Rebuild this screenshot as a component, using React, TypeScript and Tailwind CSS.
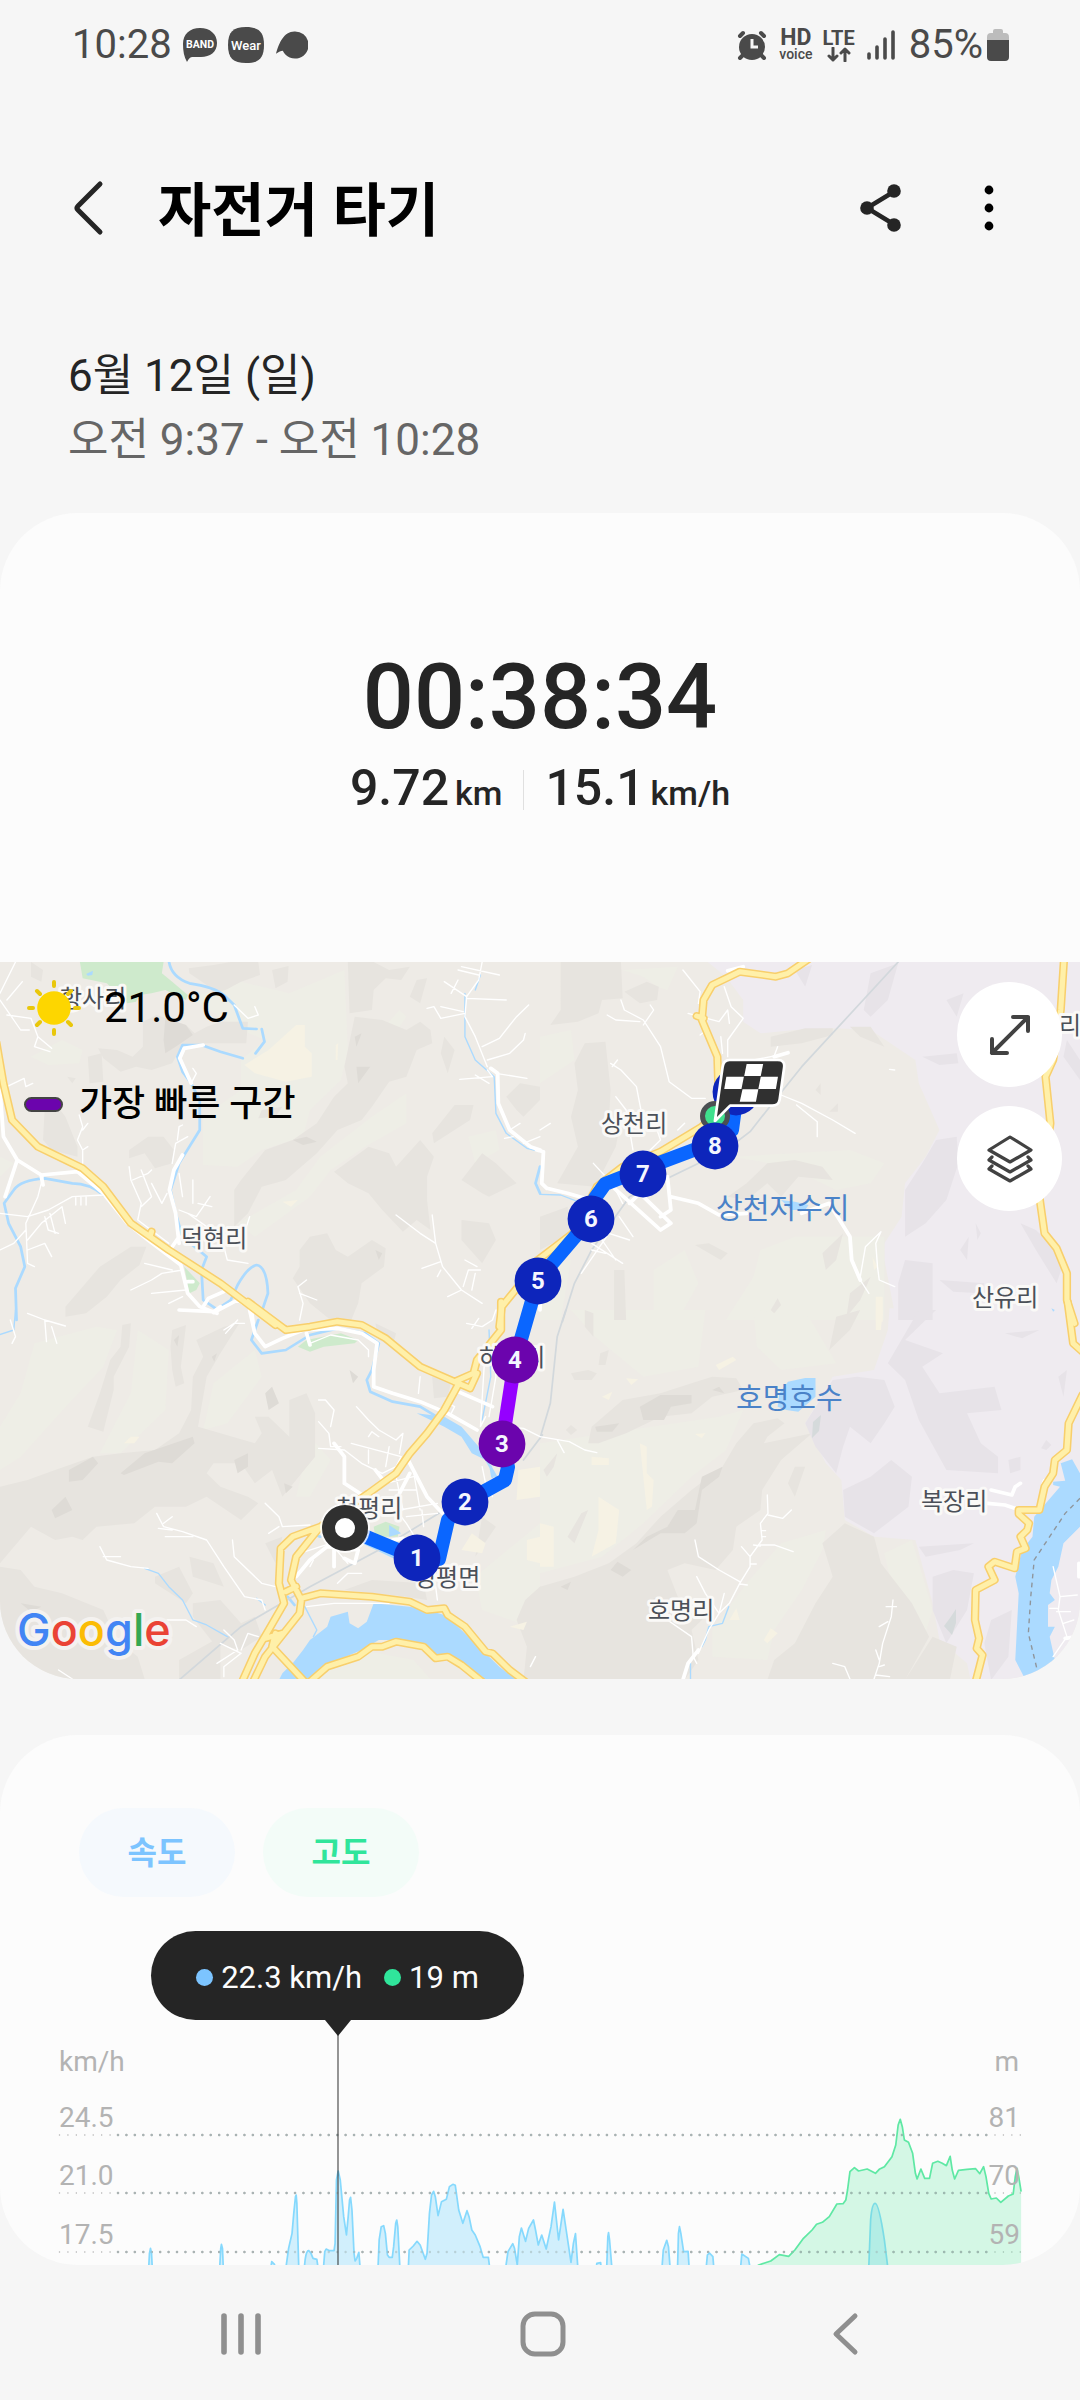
import React from "react";

type Tile = {
  at: string;
  region?: string;
  pale?: string;
  hill: string;
  violetHill?: string;
  ridge?: string;
  field: string;
  park?: string;
  lake: string;
  river: string;
  stream: string;
  rail: string;
  lane: string;
  street: string;
  highway: string;
};

const tiles: Tile[] = [
  {
    at: "translate(0 -12) scale(.34439 .33333)",
    pale: "M545 140L640 120L700 95L840 130L1000 60L1010 300L990 390L900 480L880 560L760 600L690 650L590 645L590 500L700 420L700 330L770 270L700 240ZM90 320L180 270L240 300L230 340L140 345ZM0 620L40 640L0 680ZM860 720L930 620L1080 500L1180 430L1180 520L1060 590L960 660L900 740L740 860L690 820ZM1100 250L1160 180L1180 200L1120 290ZM1360 560L1440 540L1450 600L1380 640Z",
    hill: "M548 55L620 45L670 36L750 36L755 75L700 95L655 120L620 128L600 105L550 70ZM790 60L838 48L835 95L800 115ZM1010 36L1085 36L1130 60L1190 50L1165 90L1120 85L1085 120L1080 180L1015 190ZM415 215L455 195L540 225L565 250L600 230L640 215L720 215L715 280L600 280L530 285L500 340L440 360L395 350L350 365L300 325L285 295L340 300L385 320L415 290ZM255 320L295 310L300 395L260 400ZM130 470L160 460L190 500L225 590L225 620L150 600L125 570ZM375 600L430 560L475 560L505 600L500 640L450 655L420 610L375 625ZM680 720L700 690L770 600L850 570L920 520L970 440L1010 400L1000 350L1030 200L1110 210L1180 240L1220 215L1250 240L1255 280L1210 300L1180 380L1130 395L1080 470L1050 510L980 540L920 610L830 690L760 710L720 790L680 830ZM970 665L1070 590L1130 610L1150 650L1220 570L1260 620L1240 680L1240 750L1250 840L1210 810L1170 845L1110 780L1070 730L1010 700ZM1255 550L1320 465L1375 465L1365 510L1260 580ZM1470 440L1510 400L1568 410L1568 450L1520 500L1500 480ZM1340 690L1400 610L1440 640L1500 700L1420 740L1400 730ZM870 900L900 860L950 850L975 900L1010 920L1080 870L1120 895L1115 950L1050 1000L1040 1060L1020 1110L960 1110L900 1060L850 985L870 950ZM190 1070L240 1010L290 950L380 890L425 890L405 945L350 990L310 1040L250 1090L190 1100ZM1340 810L1420 820L1440 870L1400 940L1340 870ZM90 36L125 60L120 95L90 80ZM1210 90L1240 85L1220 160L1190 140ZM1290 260L1320 300L1300 370L1280 310ZM760 480L820 470L800 500L750 505ZM195 380L220 385L210 400Z",
    ridge: "M480 205L540 225L560 255L510 290L480 310L475 270ZM850 570L890 560L920 575L880 585ZM1035 350L1075 350L1040 400ZM1030 260L1050 250L1035 290ZM1090 900L1110 910L1100 930Z",
    field: "M710 345L780 300L860 225L885 225L885 290L905 310L905 380L830 395L740 370ZM975 285L982 280L980 330L975 330ZM820 755L865 750L845 770Z",
    park: "M232 36H475L470 70L500 95L545 135L540 150L480 120L440 130L405 135L395 155L370 160L310 100L275 92L240 85ZM535 950L580 1000L570 1020L550 1030Z",
    lake: "M250 72L270 62L268 75L255 77Z",
    river:
      "M490 30Q495 80 550 100Q620 110 650 135L680 165L705 235L745 237M760 237L768 275L742 310M705 325L640 305L585 285L530 285L515 320L530 365L555 400L580 450L580 540L550 590L520 640L495 720L510 790L530 860L600 920L585 960L590 1050L630 1078L670 1050L690 1005Q720 950 745 945Q775 950 778 1030L760 1085M300 735Q260 700 210 700L130 685Q60 690 40 720L12 760L25 820L60 890L72 950L45 1015L48 1110M1568 650L1555 700L1568 730",
    stream: "M1395 75L1380 120M1350 130L1350 260L1380 330L1435 380L1440 490L1470 550L1530 595L1568 605",
    rail: "",
    lane: "M45 36L0 130M0 150L40 210L60 240L85 240M20 150L65 95M20 195L90 205L110 260L150 295M110 260L100 290L145 305M20 410L70 385L75 410L95 400M240 640L240 600L225 570L240 530L230 495M240 540L255 520M240 600L255 590M125 680L110 740L75 820L80 940L100 950M0 790L80 800L140 780L210 740L300 735M80 870L120 820L180 770L190 820M75 840L40 880L0 900M80 900L130 880L150 920M145 790L160 850M130 800L140 840L170 850M220 740L220 765M235 740L235 765M250 740L250 765M490 880L400 810L410 760L380 690L375 650M385 690L430 670L440 660M410 770L440 740L410 660M440 700L470 760L485 730M500 640L510 580L545 560M515 570L520 530L530 525M555 400L570 370L560 355M520 780L570 800L610 740M530 740L520 670M560 760L560 690M545 790L600 830L590 850M575 760L615 770M1400 36L1390 90L1355 140L1350 200L1380 260L1415 350M1390 75L1330 60M1340 50L1450 75M1355 140L1290 95M1310 130L1330 90M1355 145L1470 150M1350 190L1280 205L1260 170L1240 175M1280 170L1345 185M1400 290L1450 265L1500 200L1535 165M1415 330L1480 310L1520 270L1525 250M1415 360L1430 380L1335 388M1380 375L1420 400M1440 370L1530 385M1480 540L1510 520M1490 560L1465 565M1520 580L1568 560M1150 795L1220 850L1265 880L1255 795M1265 880L1285 950L1340 1020L1400 1060M1280 935L1225 955M1280 960L1270 980M1345 1010L1360 960L1395 960M1350 930L1385 950M1340 1020L1300 1040M1370 1020L1380 970M530 960L470 970L440 990L380 1020M540 1020L440 1030M500 960L420 940M530 1040L490 1060M650 890L660 930L720 940M700 880L725 800M870 1110L880 1060L865 1010L890 990M870 1030L920 1050M680 165L720 205L750 195L740 170",
    street: "M0 420L10 560L50 630L120 675L225 665L300 730L370 820L430 870L525 945L545 1030L580 1070L630 1090M590 1070L605 1045L650 1025M520 880L510 790L492 720L505 660L530 615M50 630L15 740M590 285L535 295L522 325L555 400M490 905L520 860M1425 355L1445 370L1447 460L1480 540L1540 590L1568 600M620 1088L690 1050L730 1075L735 1120M120 680L125 705M545 995L560 995",
    highway: "M-10 280L10 400L35 510L110 590L240 655L300 710L380 820L490 900L640 1000L800 1125M1520 990L1457 1070L1450 1130M435 860L440 845",
  },
  {
    at: "translate(540 -12) scale(.34439 .33333)",
    region: "M480 30H1575V1115H1035L1000 930V880L1050 800L1060 700L1120 620L1160 540L1100 400L1090 330L960 240L860 235L740 240L640 250L590 215V150L540 80Z",
    pale: "M240 60L400 50L370 120L340 110L300 80ZM0 260L90 240L100 330L0 400ZM560 620L900 600L1000 640L960 700L860 720L720 650ZM740 860L1000 860L1000 1110L540 1110L620 980L640 900ZM330 960L420 900L460 1000L400 1110L330 1110ZM0 940L90 930L60 1110H0Z",
    hill: "M60 36H235L240 145L180 150L170 190L110 215L30 225L60 180ZM245 125L310 95L345 110L340 150L290 160ZM100 340L130 280L190 275L205 420L200 510L230 540L220 590L160 710L50 700L110 590L90 500L110 420ZM600 700L660 640L740 630L820 650L850 690L750 680L700 740L660 700L600 750L545 740ZM450 885L490 880L545 910L525 930ZM215 960L245 960L250 1110H215ZM670 260L770 235L850 235L850 255L760 280L670 290ZM0 800L80 770L90 850L0 900ZM820 910L880 850L860 930L830 960ZM800 420L815 400L815 435ZM840 485L865 460L865 485ZM900 1030L960 980L930 1050L890 1100ZM670 1080L690 1045L700 1065L680 1090ZM900 230L960 230L1000 290L930 260Z",
    violetHill: "M1060 720L1110 640L1150 570L1210 560L1215 640L1180 750L1120 820L1060 860ZM1060 930L1140 940V1110H1040V1000ZM1110 320L1210 310L1215 340L1160 345ZM960 70L1040 40L1010 150L960 200L940 180ZM1395 820L1440 840L1480 880L1520 940L1500 1000L1440 900ZM1160 990L1290 1000L1280 1030L1200 1025ZM1530 270L1568 330V390L1520 320ZM1180 150L1230 130L1210 200ZM1265 820L1280 850L1270 870ZM1220 900L1245 860L1240 930ZM740 60L790 45L770 110Z",
    field: "M975 1040H995V1115H975ZM965 920L980 950L970 960Z",
    lake: "M700 750L740 755L780 765L770 780L730 780ZM1485 1075L1495 1080L1490 1085Z",
    river: "",
    stream: "M0 733L60 735L110 755M380 740L410 750",
    rail: "M1040 36L760 350L690 440L610 545L540 600L260 740L150 900L100 1000L65 1115",
    lane: "M415 60L465 125L460 160M235 150L245 180L300 210L350 290L375 395L440 445L480 445M195 195L220 210L290 215M300 225L330 180L320 165M205 340L235 360L280 410L295 490M210 350L225 330M535 110L555 170L590 205L545 270L545 320M430 190L520 215L545 180L550 220M525 260L530 310M465 255L490 235M700 435L760 460L850 510L915 550M745 465L805 515V560M220 440L250 480L270 600M155 640L200 690M930 980L945 890L990 845L975 880L980 950L985 990L1030 1010M930 990L955 1030M150 880L240 940M120 970L200 850L260 870M180 870L220 930M0 540L30 520M620 330L680 318L690 290M320 600L350 570L340 540M1015 358L1030 360M210 700L240 760M230 800L270 860M400 540L420 520M150 900L190 910",
    street: "M380 740L460 760L520 795L600 790M760 790L840 760L900 860L905 930L930 990M-10 600L10 605L5 700L20 715M200 700L350 840L380 820L300 740M370 680L380 780L350 800M680 320L720 308M545 62L590 50M240 700L290 730M260 760L300 720M0 1080V1000M20 715L80 730L130 745",
    highway: "M790 20L720 70L685 80L580 65L500 105L475 150L470 210L515 320L520 480L470 530L350 605L240 650L165 710L120 800L95 850L-10 933L-50 990M455 198L475 205M1522 20L1512 180L1490 330L1468 380L1482 520L1450 740L1465 850L1500 895L1530 970V1050L1552 1120",
  },
  {
    at: "translate(0 348) scale(.34439 .33333)",
    pale: "M100 100L280 50L340 60L300 170L200 280L60 440L0 480V350L60 250ZM400 60L490 120L480 300L350 430L290 430L380 250ZM620 220L740 120L760 200L660 340L590 360ZM900 380L960 450L900 560L860 560ZM1380 800L1568 640V960L1400 900ZM1000 1010L1200 1050L1250 1107H930Z",
    hill: "M355 45L380 40L375 110L330 200L330 240L300 365L255 350L290 250L320 150L350 110ZM500 60L540 45L535 90L525 170L535 220L510 230L500 180L495 110ZM570 90L650 50L695 40L640 130L600 200L575 350L740 400L760 370L740 320L780 320L840 380L840 270L890 250L915 310L915 440L820 560L790 480L740 520L700 460L620 460L600 490L640 530L720 560L750 580L700 630L600 560L540 590L450 590L390 640L280 650L240 690L210 680L160 690L90 650L0 760V530L80 510L160 480L270 440L350 430L450 420L520 370L555 300L560 200L590 140ZM1090 40L1150 70L1140 110L1100 90ZM1255 200L1310 215L1300 260L1260 265ZM0 770L60 780L100 830L180 850L300 900L340 990L400 1040L420 1107H0ZM450 800L520 770L560 850L540 880L450 820ZM560 880L640 870L700 940L740 920L760 980L700 1020L620 1000L560 920ZM1400 620L1440 650L1380 740ZM520 1050L640 980V1107H520ZM1000 840L1080 810L1230 820L1240 870L1180 860ZM770 700L820 680L800 760ZM550 740L620 760L650 830L560 800ZM1570 828L1525 870L1500 930L1530 1010L1520 1110H1570Z",
    ridge: "M350 490L420 430L560 380L565 400L500 460L460 455L360 495ZM200 480L270 440L285 460L240 510L200 515ZM150 600L190 560L210 600L160 625ZM680 450L720 430V470L690 490ZM770 250L790 230L810 280L780 300ZM615 140L630 130L622 155ZM505 90L520 75L515 110ZM1015 180L1040 200L1025 220ZM60 880L120 890L90 905ZM825 520L850 530L830 550Z",
    field: "M360 400L380 380H405L390 400ZM1505 480L1568 470V560L1500 570ZM1340 720L1370 670L1410 700L1400 730ZM1530 690L1568 680V760L1530 750ZM1480 950L1530 935L1520 960Z",
    park: "M865 110L890 90L990 70L1040 90L1030 100L940 110L900 125ZM1085 650L1120 635L1160 650L1155 680H1090Z",
    lake: "M850 1060L880 1020L900 990L950 950L960 920L1010 905L1015 940L1040 955L1065 935L1085 880L1190 890L1240 900L1290 915L1330 950L1400 1020L1450 1070L1500 1110H1400L1330 1060L1260 1040L1210 1000L1150 990L1100 990L1050 1020L960 1060L890 1110H810L820 1090ZM1210 310L1290 320L1340 350L1390 410L1410 450L1370 430L1340 380L1290 350ZM1130 645L1165 670L1130 680Z",
    river: "M750 30L730 90L760 130L830 120L900 75L980 55L1060 70L1100 100L1080 180L1065 210L1075 245L1140 275L1220 290L1300 340M1060 700L1140 740M1410 445L1440 500M1425 470L1430 500M835 860L855 885M905 670L930 680",
    stream: "M1420 60L1425 200L1400 330M420 775L460 790L490 830L530 870L560 930L600 945L660 980M885 890L920 960L910 980M-5 75L40 60L45 0M745 865L770 885",
    rail: "M1575 375L1520 450M1290 600L1100 720L900 830L700 950L520 1110",
    lane: "M925 335L955 370L960 410L990 410M925 415L1000 420L1050 460L1110 490L1150 470L1165 440L1020 400M925 270L945 270L970 300L960 350M1035 290L1070 330L1100 360L1150 390L1170 370L1160 430M1070 380L1080 365L1100 380M455 610L475 650L530 665L600 690L650 770L710 860L760 870L770 900M480 680L560 680M475 640L500 620M460 655L500 660M675 690L680 740L760 820L800 830M770 580L810 620L820 650L900 645M780 670L810 650M290 710L310 750L380 770L430 775M300 740L350 740M485 930L540 930L570 950M630 1060L690 1020L680 990L650 960M700 1020L720 970L750 980M700 1030L650 1070V1100M640 1000L700 1030M890 890L970 880L1130 880M980 820L1010 790L1050 790M650 60L680 40L710 40M655 70L690 30M80 10L130 30L190 48M130 30L135 95M150 50L165 100M30 30L45 80L35 100M1355 40L1400 50L1430 30L1440 0M1370 55L1390 25M900 100L960 75L1040 90L1070 120V140M1215 250L1220 200M1310 310L1320 290L1300 280M1410 320L1395 350L1410 100M1430 100L1440 200L1420 320M1265 830L1270 870M170 1080L210 1107M1540 1070L1555 1040M1120 520L1200 500M1130 540L1210 540M1150 500L1170 600M1200 480L1220 600M1160 600L1270 580M1180 640L1210 690M1120 560L1180 640M1225 600L1230 650M1180 620L1270 610M1400 470L1410 520L1430 560M1070 420V460M1130 410L1120 470M900 770L910 750M1470 350L1520 355L1568 380M870 730L960 700L1010 760",
    street: "M725 0L740 70L770 110L820 85L880 60L980 55L1050 70L1095 100L1085 180V230L1140 250L1220 275L1300 310L1385 360M1330 245L1430 290M890 70L900 105M1000 520V440L970 400M1180 440L1210 500L1240 560L1285 610M1000 520L1060 560M860 800L900 750L950 710L1040 720L1030 760L1000 745M970 710V770M1190 490L1160 550M1140 690L1170 685M1090 480L1120 520M520 0L620 5L640 -10",
    highway: "M720 -25L830 60L900 50L980 35L1050 45L1120 85L1220 170L1320 215L1365 235L1385 190M1320 215L1375 190L1385 150L1455 60V-25M1330 225L1290 300L1240 370L1190 430L1150 490L1070 550L1000 600L930 650L860 740L845 810L875 870L870 910L770 1040L735 1115M930 650L850 680L815 715L810 820L825 880L780 960L740 1030L703 1115M830 845L860 830M875 865L930 850L1080 860L1190 875L1240 900L1290 895L1300 915L1350 950L1410 1025L1430 1030L1480 1080L1525 1115M770 985L820 970M800 970L790 1010L885 1115M900 1115L950 1070L1040 1040L1080 1010L1110 1010L1150 995L1230 1010L1265 1045L1300 1040L1340 1065L1400 1115",
  },
  {
    at: "translate(540 348) scale(.34439 .33333)",
    region: "M1015 -5H1575V1110H1250L1240 1060L1160 990L1140 880L1090 690L970 680L885 630L875 510L830 460L770 340L850 200L970 180L1010 60Z",
    pale: "M0 400L520 320L590 300L540 420L440 500L300 640L180 740L0 790ZM600 820L700 700L830 660L820 720L760 840L680 960L660 1050L500 1040V960ZM1000 730L1080 690L1140 900L1110 1000L1020 820ZM90 0H480L460 170L300 200L160 80ZM620 0L780 20L860 160L700 180L630 110Z",
    hill: "M140 400L150 350L240 270L350 250L440 220L500 200L570 205L590 240L500 260L440 310L350 320L250 370L170 400ZM280 700L350 620L440 540L530 470L570 400L620 340L690 325L710 340L660 380L650 400L790 370L700 450L645 540L640 600L570 650L560 720L510 780L420 760L370 780L400 860L500 900L440 960L460 1050L420 1110H0V830L100 800L200 760ZM820 700L885 640L970 680L990 760L1080 880L1130 980L1060 1110H660L680 1050L740 1000L800 880L850 800ZM720 520L740 470L770 470L740 560ZM1060 1110L1140 980L1210 1010L1190 1110ZM860 20L930 0L900 60L840 120ZM90 190L140 180L165 190L150 210H100ZM175 130L200 120L190 165L170 165ZM80 680L120 610L140 600L100 700ZM10 480L50 430L40 470L20 500ZM130 0L155 10V80L130 50ZM75 360L90 345L108 360L90 375Z",
    violetHill: "M880 540L960 500L1020 450L1080 500L1070 590L970 670L885 620ZM770 340L850 210L920 200L1000 210L1030 290L1000 340L960 400L900 350L880 410L860 490L800 410ZM1010 160L1100 0L1150 0L1060 90L1170 130L1110 170L1160 250L1320 230L1340 300L1240 310L1280 400L1330 440L1330 490L1180 480L1100 330L1060 210ZM1100 710L1260 700L1220 720L1120 740ZM1140 800L1200 780L1260 790L1240 900L1180 1000L1140 900ZM1310 930L1370 900L1360 1040L1310 1110L1290 1000ZM1505 200L1530 180L1520 260ZM1360 450L1395 440V480L1365 490ZM1350 70L1450 60L1400 85ZM1455 415L1470 390L1485 405L1470 420Z",
    ridge: "M290 290L350 255L440 255L440 280L380 290L360 330H300ZM160 350L230 340L210 365H165ZM270 720L310 680L370 650L400 600L450 600L470 500L530 470L520 500L470 540L455 640L420 670L350 670ZM205 780L225 755L265 780L240 800ZM500 240L520 230L535 250ZM320 870L345 860L350 890ZM60 830L90 815L80 840Z",
    field: "M150 440L200 445V465H150ZM290 400L310 410V490L330 510L325 590L310 600ZM170 560L230 600L220 700L150 740L170 660ZM0 640L40 650V770H0ZM510 165L560 140L570 150L520 180ZM975 0H995L990 60H975ZM650 990L670 955L690 970L660 1000ZM550 930L570 895L580 930ZM250 205L285 208L265 225ZM180 260L210 245L200 270ZM450 372L480 370L470 385Z",
    lake: "M720 215L770 204H800V260L750 305L715 300L690 290L695 250ZM1512 460L1545 448L1568 490V650L1520 700L1505 770L1485 810L1480 850L1495 870L1475 885V950L1495 950L1480 980L1495 1050L1460 1110H1410L1380 1050L1385 950L1390 850L1380 800L1400 720L1430 680L1435 620L1510 530L1490 525V515L1525 512Z",
    river: "",
    stream: "M548 890L530 940L490 950L480 990L470 1010M437 1060V1110",
    rail: "M75 0L50 80L30 280L0 385",
    lane: "M660 555L662 610L640 640L645 690L610 740V770L580 820L550 880L520 910L490 960L460 1030M662 615L705 625L730 600M640 705L680 705L735 725M620 705L640 708M645 680H655M645 662H655M610 762H628M580 822L602 825M585 710L610 740M450 690L460 740L520 780L580 815M455 800L480 850L520 910L535 850M370 930L440 980L445 1040L455 1060M1025 870L1020 920L995 1000L985 1060L970 1107M1005 890H1035M985 950L1010 935M985 1070L1000 1065M975 1020L985 1050M975 1095L1015 1100M850 1060L885 1070L900 1107M0 380L85 395L130 420L165 428M50 390L70 428M1490 770L1510 860L1505 900L1530 980L1490 1040M1510 860L1560 855M1500 905H1540M1520 940L1550 930M1480 895H1505",
    street: "M1300 580L1350 585L1385 597M1310 540L1370 555L1380 530L1395 520M460 1020L430 1060L415 1110M1461 522L1465 512M1565 760V800M1525 985L1560 980",
    highway: "M1532 -25L1548 100L1575 125M1575 255L1535 340L1530 420L1495 450L1490 490L1465 530L1450 600H1390V612L1420 640L1415 660L1395 680L1410 715L1385 725L1378 775L1320 755L1302 770L1320 810L1265 840L1263 930L1275 985L1268 1015L1285 1035L1265 1115",
  },
];

const seam = "M1568 565L1525 610L1435 750L1425 860L1418 970L1445 1085";

const places = [
  { name: "항사리", x: 60, y: 45 },
  { name: "덕현리", x: 181, y: 285 },
  { name: "상천리", x: 601, y: 170 },
  { name: "산유리", x: 972, y: 344 },
  { name: "리", x: 1059, y: 72 },
  { name: "하천리", x: 479, y: 404 },
  { name: "청평리", x: 336, y: 555 },
  { name: "청평면", x: 414, y: 624 },
  { name: "복장리", x: 921, y: 548 },
  { name: "호명리", x: 648, y: 657 },
];

const waters = [
  { name: "상천저수지", x: 716, y: 257 },
  { name: "호명호수", x: 736, y: 447 },
];

const stops = [
  { n: 1, x: 417, y: 596 },
  { n: 2, x: 465, y: 540 },
  { n: 3, x: 502, y: 482, fast: true },
  { n: 4, x: 515, y: 398, fast: true },
  { n: 5, x: 538, y: 319 },
  { n: 6, x: 591, y: 257 },
  { n: 7, x: 643, y: 212 },
];

function Stop({ n, x, y, fast }: { n: number; x: number; y: number; fast?: boolean }) {
  return (
    <g>
      <circle cx={x} cy={y} r="23.4" fill={fast ? "#6b04ad" : "#0d25bb"} />
      <text x={x} y={y + 8} textAnchor="middle" fontSize="24" fontWeight="700" fill="#f4f6ff">
        {n}
      </text>
    </g>
  );
}

function Layer({ pick, ...rest }: { pick: keyof Tile } & Omit<React.SVGProps<SVGGElement>, "ref">) {
  return (
    <g {...rest}>
      {tiles.map((t) => (t[pick] ? <path key={t.at} transform={t.at} d={t[pick]} /> : null))}
    </g>
  );
}

function RouteMap() {
  const line = { fill: "none", strokeLinejoin: "round", strokeLinecap: "round" } as const;
  return (
    <svg viewBox="0 0 1080 717" className="block h-auto w-full" role="img" aria-label="경로 지도">
      <rect width="1080" height="717" fill="#eeebe6" />
      <Layer pick="region" fill="#efebf0" />
      <Layer pick="pale" fill="#eeeee6" />
      <Layer pick="hill" fill="#e7e4df" />
      <Layer pick="violetHill" fill="#e7e3e8" />
      <Layer pick="ridge" fill="#dedbd6" />
      <Layer pick="field" fill="#f6f2e4" />
      <Layer pick="park" fill="#ceeacc" />
      <path d="M950 656l6-9v14l-4 12-8-9zM813 460l8-7-2 16-7 7z" fill="#d5dadb" />
      <Layer pick="lake" fill="#abdaff" />
      <Layer pick="river" {...line} stroke="#abdaff" strokeWidth="8" />
      <Layer pick="stream" {...line} stroke="#abdaff" strokeWidth="4" />
      <Layer pick="rail" {...line} stroke="#d2d8dc" strokeWidth="5" />
      <path transform={tiles[3].at} d={seam} fill="none" stroke="#8f959b" strokeWidth="4" strokeDasharray="14 13" />
      <Layer pick="lane" {...line} stroke="#ffffff" strokeWidth="4" />
      <Layer pick="street" {...line} stroke="#ffffff" strokeWidth="11" />
      <Layer pick="highway" {...line} stroke="#f8cf6c" strokeWidth="24" />
      <Layer pick="highway" {...line} stroke="#fff0a9" strokeWidth="15" />

      <g fontSize="24" fill="#4b5058" stroke="#faf9f7" strokeWidth="6" strokeLinejoin="round" paintOrder="stroke">
        {places.map((p) => (
          <text key={p.name} x={p.x} y={p.y}>
            {p.name}
          </text>
        ))}
      </g>
      <g fontSize="29" fill="#4a82c8">
        {waters.map((p) => (
          <text key={p.name} x={p.x} y={p.y}>
            {p.name}
          </text>
        ))}
      </g>
      <text
        x="17"
        y="684"
        fontSize="45"
        fontWeight="500"
        fontFamily="Inter, sans-serif"
        stroke="#f4f2f0"
        strokeWidth="8"
        strokeLinejoin="round"
        paintOrder="stroke"
      >
        <tspan fill="#4285f4">G</tspan>
        <tspan fill="#ea4335">o</tspan>
        <tspan fill="#fbbc05">o</tspan>
        <tspan fill="#4285f4">g</tspan>
        <tspan fill="#34a853">l</tspan>
        <tspan fill="#ea4335">e</tspan>
      </text>

      <g {...line} strokeWidth="14">
        <path d="M345 566L417 596L439 597L448 558L465 540L505 518L508 505L502 482" stroke="#0a66ff" />
        <path d="M515 398L538 318L591 256L595 236L605 222L643 207L715 180L732 168L736 138" stroke="#0a66ff" />
        <path d="M502 482L515 398" stroke="#9500ff" strokeLinecap="butt" />
      </g>
      <circle cx="345" cy="566" r="25" fill="#ffffff" opacity=".8" />
      <circle cx="345" cy="566" r="16.5" fill="#ffffff" stroke="#303030" strokeWidth="13" />
      {stops.map((s) => (
        <Stop key={s.n} {...s} />
      ))}
      <circle cx="736" cy="130" r="23.4" fill="#0d25bb" />
      <circle cx="715" cy="154" r="12.5" fill="#3fe08d" stroke="#4b4f52" strokeWidth="5" />
      <g transform={tiles[1].at}>
        <path
          d="M550 330H690Q712 330 709 352L696 448Q693 467 674 467H552L508 513L530 352Q533 330 550 330Z"
          fill="#303030"
          stroke="#ffffff"
          strokeWidth="8"
          strokeLinejoin="round"
        />
        <path
          d="M600 342H648L641 378H593ZM541 380H592L585 417H535ZM641 380H691L685 417H634ZM588 418H634L627 455H580Z"
          fill="#ffffff"
        />
      </g>
      <Stop n={8} x={715} y={184} />
    </svg>
  );
}

const speedPeaks =
  "M431 730L434 670L437 655L440 670L443 730M637 730L641 655L643 643L646 655L649 730M784 730L789 695L797 703L800 730M828 730L838 655L848 610L853 550L858 500L860 495L862 520L868 730M883 730C885 680 890 660 897 662L903 670L909 685L920 688L926 730M938 730L943 665L947 657L957 662L970 662L973 640L977 450L982 423L988 450L998 560L1006 615L1011 560L1015 510L1018 502L1022 540L1028 670L1031 693L1036 685L1042 667L1047 730M1097 730L1101 630L1107 590L1114 587L1119 610L1125 675L1130 682H1139L1143 650L1149 580L1152 570L1155 590L1162 730M1185 730L1188 660L1200 648L1211 634L1220 645L1235 688L1240 670L1247 550L1253 495L1259 484L1264 500L1272 557L1282 515L1296 508L1305 470L1315 463L1322 466L1332 540L1344 580L1356 542L1362 560L1370 600L1380 615L1394 650L1403 682H1418L1424 730M1466 730L1475 665L1489 641L1494 655L1502 705L1508 620L1514 594L1526 634L1535 595L1549 570L1555 600L1563 645L1573 615L1586 657L1600 590L1610 516L1622 630L1635 538L1644 600L1658 697L1665 640L1671 611L1679 730M1730 730L1733 700L1744 698L1747 730M1761 730L1765 620L1767 608L1770 630L1778 730M1921 730L1926 660L1936 631L1941 650L1947 730M1967 730L1970 610L1973 590L1977 610L1985 665L1998 664L2002 730M2049 730L2054 675L2060 669L2070 680L2074 730M2149 730L2154 672L2173 685L2181 730M2522 730L2528 570Q2532 520 2541 520Q2552 520 2568 630L2580 730";

const climb =
  "M2190 715L2203 705L2238 693L2263 674L2290 679L2308 660L2333 625L2358 600L2371 583L2388 577L2408 560L2430 522L2448 521L2456 510L2461 480L2468 425L2481 413L2493 423L2518 417L2542 430L2553 418L2568 410L2590 380L2601 345L2608 285L2614 268L2620 290L2626 330L2638 337L2650 370L2658 430L2663 447L2674 417L2685 445H2699L2708 400L2723 394L2736 400L2748 407L2759 379L2765 420L2772 447L2783 421L2808 418L2833 416L2845 431L2856 410L2863 440L2871 490L2878 507L2893 504L2906 517L2928 498L2942 492L2948 440L2953 415L2958 440L2965 485";

const ticks = [
  { speed: "24.5", height: "81", y: 115 },
  { speed: "21.0", height: "70", y: 173 },
  { speed: "17.5", height: "59", y: 232 },
];

function Chart() {
  return (
    <svg viewBox="0 0 1080 245" className="block h-auto w-full" role="img" aria-label="속도와 고도 그래프">
      {ticks.map((t) => (
        <g key={t.y} stroke="#b3b3b3" strokeLinecap="round">
          <path d={`M59.5 ${t.y}H112`} strokeWidth="1.5" strokeDasharray="0 8.43" />
          <path d={`M118 ${t.y}H990`} strokeWidth="2.6" strokeDasharray="0 8.43" />
          <path d={`M995 ${t.y}H1021`} strokeWidth="1.5" strokeDasharray="0 8.43" />
        </g>
      ))}
      <g transform="translate(0 10) scale(.34439 .33333)" strokeLinejoin="round">
        <path d={speedPeaks} fill="#d1effc" stroke="#86d9fd" strokeWidth="5" />
        <path d={`${climb}V730H2180Z`} fill="#5ce79f" fillOpacity=".25" />
        <path d={climb} fill="none" stroke="#5fe8a4" strokeWidth="5" />
      </g>
      {ticks.map((t) => (
        <path
          key={t.y}
          d={`M118 ${t.y}H990`}
          stroke="#9fb3b3"
          strokeWidth="2.4"
          strokeLinecap="round"
          strokeDasharray="0 8.43"
          opacity=".5"
        />
      ))}
      <path d="M338 10V245" stroke="#252525" strokeOpacity=".6" strokeWidth="1.6" />
      <path d="M325 0H351L338 16Z" fill="#252525" />
      <g fontSize="28" fill="#b3b3b3">
        <text x="59" y="51">km/h</text>
        <text x="1019" y="51" textAnchor="end">m</text>
        {ticks.map((t) => (
          <g key={t.y}>
            <text x="59" y={t.y - 8}>{t.speed}</text>
            <text x="1020" y={t.y - 8} textAnchor="end">{t.height}</text>
          </g>
        ))}
      </g>
    </svg>
  );
}

function StatusBar() {
  return (
    <div className="flex h-22 items-center justify-between pt-0.5 pr-[71px] pl-[72px] text-[#4a4a4a]">
      <div className="flex items-center">
        <span className="text-[40px] leading-none">10:28</span>
        <svg viewBox="0 0 36 36" className="ml-2.5 size-9" fill="currentColor" aria-hidden="true">
          <path d="M1 17C1 7 8 1 18 1s17 6 17 15-7 14-16 14H10c-2 0-4 3-5 5C2 30 1 24 1 17z" />
          <text x="18" y="21" textAnchor="middle" fontSize="10.5" fontWeight="700" fill="#fff">BAND</text>
        </svg>
        <svg viewBox="0 0 36 36" className="ml-2.5 size-9" fill="currentColor" aria-hidden="true">
          <path d="M18 0C31 0 36 5 36 18S31 36 18 36 0 31 0 18 5 0 18 0z" />
          <text x="18" y="23" textAnchor="middle" fontSize="13" fontWeight="500" fill="#fff">Wear</text>
        </svg>
        <svg viewBox="0 0 33 28" className="ml-3 h-7 w-8" fill="currentColor" aria-hidden="true">
          <path d="M19 0a14 14 0 1 1-12 20c-2 0-4 1-7 3C3 12 8 0 19 0z" />
        </svg>
      </div>
      <div className="flex items-center">
        <svg viewBox="0 0 30 30" className="size-[30px]" aria-hidden="true">
          <circle cx="15" cy="17" r="13" fill="currentColor" />
          <g fill="none" stroke="currentColor" strokeWidth="4" strokeLinecap="round">
            <path d="M3 6l3-3M27 6l-3-3M6 25l-3 3M24 25l3 3" />
          </g>
          <path d="M15 9v8h6" fill="none" stroke="#f6f6f6" strokeWidth="3" />
        </svg>
        <div className="ml-3 flex flex-col items-center font-bold">
          <span className="text-[23px] leading-[18px]">HD</span>
          <span className="text-[14px] leading-[14px] font-medium">voice</span>
        </div>
        <div className="ml-2.5 flex flex-col items-center">
          <span className="text-[20px] leading-[18px] font-bold">LTE</span>
          <svg
            viewBox="0 0 24 15"
            className="h-[15px] w-6"
            fill="none"
            stroke="currentColor"
            strokeWidth="3"
            strokeLinecap="round"
            strokeLinejoin="round"
            aria-hidden="true"
          >
            <path d="M6 1v12M2 9l4 4 4-4M18 14V2M14 6l4-4 4 4" />
          </svg>
        </div>
        <svg
          viewBox="0 0 28 30"
          className="ml-3 h-[30px] w-7"
          fill="none"
          stroke="currentColor"
          strokeWidth="3.6"
          strokeLinecap="round"
          aria-hidden="true"
        >
          <path d="M2 28v-4M10 28V17M18 28V9M26 28V2" />
        </svg>
        <span className="ml-3.5 text-[40px] leading-none">85%</span>
        <svg viewBox="0 0 22 32" className="ml-1 h-8 w-[22px]" aria-hidden="true">
          <path d="M6 2q0-2 2-2h6q2 0 2 2v2h2q4 0 4 4v4H0V8q0-4 4-4h2z" fill="#bcbcbc" />
          <path d="M0 11h22v17q0 4-4 4H4q-4 0-4-4z" fill="currentColor" />
        </svg>
      </div>
    </div>
  );
}

export default function App() {
  return (
    <div className="flex min-h-screen w-full flex-col overflow-hidden bg-[#f6f6f6] font-['Roboto','Noto_Sans_CJK_KR',sans-serif] text-[#252525]">
      <StatusBar />

      <header className="flex h-60 items-center pr-[71px] pl-[68px]">
        <button type="button" aria-label="뒤로" className="flex h-14 w-10 items-center justify-center">
          <svg
            viewBox="0 0 40 56"
            className="h-14 w-10"
            fill="none"
            stroke="currentColor"
            strokeWidth="5"
            strokeLinecap="round"
            strokeLinejoin="round"
          >
            <path d="M32 4L10 26q-2 2 0 4l22 22" />
          </svg>
        </button>
        <h1 className="ml-[50px] pt-1.5 text-[58px] leading-[72px] font-bold text-black">자전거 타기</h1>
        <button type="button" aria-label="공유" className="ml-auto flex size-12 items-center justify-center">
          <svg viewBox="0 0 48 48" className="size-12" fill="currentColor">
            <path d="M38 7L10 24l28 17" fill="none" stroke="currentColor" strokeWidth="4.5" />
            <circle cx="37" cy="7" r="6.8" />
            <circle cx="10" cy="24" r="6.8" />
            <circle cx="37" cy="41" r="6.8" />
          </svg>
        </button>
        <button type="button" aria-label="더보기" className="ml-16 flex h-12 w-10 items-center justify-center text-black">
          <svg viewBox="0 0 10 48" className="h-12 w-2.5" fill="currentColor">
            <circle cx="5" cy="6" r="4.4" />
            <circle cx="5" cy="24" r="4.4" />
            <circle cx="5" cy="42" r="4.4" />
          </svg>
        </button>
      </header>

      <div className="px-[68px] pt-4 pb-[41px] text-[44px] leading-[64px]">
        <p>6월 12일 (일)</p>
        <p className="text-[#666666]">오전 9:37 - 오전 10:28</p>
      </div>

      <section className="overflow-hidden rounded-[78px] bg-[#fcfcfc]">
        <div className="flex flex-col items-center pt-[135px] pb-[142px] font-medium">
          <p className="text-[90px] leading-[100px]">00:38:34</p>
          <div className="mt-3 flex h-15 items-center">
            <p className="text-[50px] leading-[60px]">
              9.72<span className="ml-1.5 text-[34px]">km</span>
            </p>
            <div className="mx-[21px] h-10 w-px bg-[#e0e0e0]" />
            <p className="text-[50px] leading-[60px]">
              15.1<span className="ml-1.5 text-[34px]">km/h</span>
            </p>
          </div>
        </div>

        <div className="relative">
          <RouteMap />
          <div className="absolute top-0 left-0 flex flex-col pt-[18px] pl-6 text-black">
            <div className="flex h-14 items-center">
              <svg viewBox="-30 -30 60 60" className="size-15" aria-hidden="true">
                <circle r="16.8" fill="#fdd600" />
                <path
                  d="M0-26v4M0 22v4M-25 0h4M21 0h4M-17-17l3 3M14 14l3 3M17-17l-3 3M-14 14l-3 3"
                  stroke="#e9c70b"
                  strokeWidth="4"
                  strokeLinecap="round"
                />
              </svg>
              <span className="ml-5 text-[42px] leading-[56px]">21.0°C</span>
            </div>
            <div className="mt-10 flex h-14 items-center">
              <span className="h-[15px] w-[39px] rounded-full border-2 border-[#444444] bg-[#6b04ad]" />
              <span className="ml-4 text-[36px] leading-[56px] font-medium">가장 빠른 구간</span>
            </div>
          </div>
          <div className="absolute top-5 right-[18px] flex flex-col gap-[19px] text-[#424242]">
            <button type="button" aria-label="지도 확대" className="flex size-[105px] items-center justify-center rounded-full bg-white">
              <svg
                viewBox="0 0 44 44"
                className="size-11"
                fill="none"
                stroke="currentColor"
                strokeWidth="4"
                strokeLinecap="round"
                strokeLinejoin="round"
              >
                <path d="M4 40L40 4M25 4h15v14M4 26v14h15" />
              </svg>
            </button>
            <button type="button" aria-label="지도 레이어" className="flex size-[105px] items-center justify-center rounded-full bg-white">
              <svg
                viewBox="0 0 48 48"
                className="size-12"
                fill="none"
                stroke="currentColor"
                strokeWidth="3.2"
                strokeLinecap="round"
                strokeLinejoin="round"
              >
                <path d="M24 2L45 15 24 27 3 15zM6 22l-3 3 21 12 21-12-3-3M6 31l-3 3 21 12 21-12-3-3" />
              </svg>
            </button>
          </div>
        </div>
      </section>

      <section className="mt-14 overflow-hidden rounded-[78px] bg-[#fcfcfc]">
        <div className="flex gap-7 pt-[73px] pl-[79px] text-[32px] leading-[48px] font-bold">
          <button type="button" aria-pressed="true" className="h-[89px] w-[156px] rounded-full bg-[#f5f9fd] text-[#7cc4ff]">
            속도
          </button>
          <button type="button" aria-pressed="true" className="h-[89px] w-[156px] rounded-full bg-[#f3fcf8] text-[#30e59b]">
            고도
          </button>
        </div>
        <div className="mt-[34px] ml-[14%] flex h-[89px] w-fit items-center rounded-full bg-[#252525] px-[45px] pt-1 text-[31px] leading-10 text-[#fcfcfc]">
          <span className="mr-2 size-[17px] rounded-full bg-[#7cc4ff]" />
          22.3 km/h
          <span className="mr-2 ml-[22px] size-[17px] rounded-full bg-[#30e59b]" />
          19 m
        </div>
        <Chart />
      </section>

      <nav className="grid h-[135px] grid-cols-3 items-center pt-0.5 pr-[84px] pl-[90px] text-[#8f8f8f]">
        <button type="button" aria-label="최근 앱" className="flex justify-center">
          <svg viewBox="0 0 42 44" className="h-11 w-[42px]" fill="none" stroke="currentColor" strokeWidth="5.6" strokeLinecap="round">
            <path d="M4 4v36M21 4v36M38 4v36" />
          </svg>
        </button>
        <button type="button" aria-label="홈" className="flex justify-center">
          <svg viewBox="0 0 46 46" className="size-[46px]" fill="none" stroke="currentColor" strokeWidth="5">
            <rect x="3" y="3" width="40" height="40" rx="12" />
          </svg>
        </button>
        <button type="button" aria-label="이전" className="flex justify-center">
          <svg
            viewBox="0 0 28 44"
            className="h-11 w-7"
            fill="none"
            stroke="currentColor"
            strokeWidth="5"
            strokeLinecap="round"
            strokeLinejoin="round"
          >
            <path d="M24 4L5 22l19 18" />
          </svg>
        </button>
      </nav>
    </div>
  );
}
